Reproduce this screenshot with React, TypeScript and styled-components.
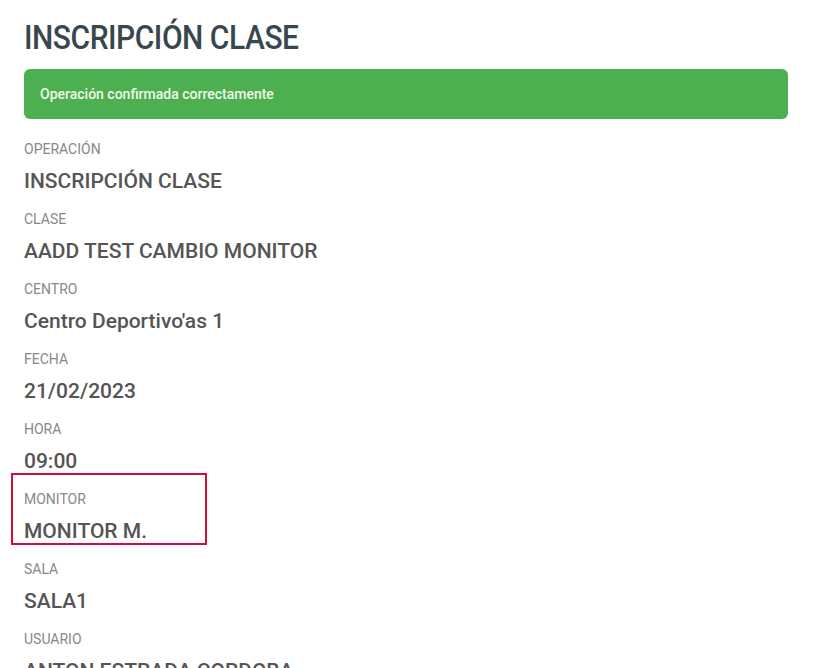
import React from 'react';
import styled, {createGlobalStyle} from 'styled-components';

const GlobalStyle = createGlobalStyle`
	html, body {
		margin: 0;
		padding: 0;
		background: #fff;
		font-family: Roboto, "Liberation Sans", sans-serif;
	}
`;

const Page = styled.div`
	padding: 18px 48px 0 24px;
	width: 764px;
	height: 668px;
	overflow: hidden;
`;

const Title = styled.h1`
	margin: 0;
	font-size: 33px;
	font-weight: 500;
	line-height: 40px;
	color: #37474f;
	letter-spacing: -0.5px;
	transform: scaleX(0.908);
	transform-origin: left center;
	white-space: nowrap;
`;

const Alert = styled.div`
	margin-top: 11px;
	height: 50px;
	display: flex;
	align-items: center;
	padding: 0 16px;
	background: #4caf50;
	border-radius: 6px;
	color: #f1f8e9;
	font-size: 14px;
	font-weight: 500;
`;

const Fields = styled.dl`
	margin: 21px 0 0;
	display: flex;
	flex-direction: column;
`;

const Field = styled.div<{$highlight?: boolean}>`
	height: 70px;
	box-sizing: border-box;
	position: relative;
	${p => p.$highlight && `
		&::after {
			content: '';
			position: absolute;
			left: -13px;
			top: -17px;
			width: 196px;
			height: 72px;
			box-sizing: border-box;
			border: 2px solid #d0103a;
		}
	`}
`;

const Label = styled.dt`
	font-size: 14px;
	line-height: 18px;
	color: #888;
	text-transform: uppercase;
`;

const Value = styled.dd`
	margin: 11px 0 0;
	font-size: 21px;
	line-height: 24px;
	font-weight: 500;
	color: #555;
`;

const rows = [
	['Operación', 'INSCRIPCIÓN CLASE'],
	['Clase', 'AADD TEST CAMBIO MONITOR'],
	['Centro', "Centro Deportivo'as 1"],
	['Fecha', '21/02/2023'],
	['Hora', '09:00'],
	['Monitor', 'MONITOR M.'],
	['Sala', 'SALA1'],
	['Usuario', 'ANTON ESTRADA CORDOBA'],
];

export default function App() {
	return (
		<Page>
			<GlobalStyle />
			<Title>INSCRIPCIÓN CLASE</Title>
			<Alert>Operación confirmada correctamente</Alert>
			<Fields>
				{rows.map(([label, value]) => (
					<Field key={label} $highlight={label === 'Monitor'}>
						<Label>{label}</Label>
						<Value>{value}</Value>
					</Field>
				))}
			</Fields>
		</Page>
	);
}
